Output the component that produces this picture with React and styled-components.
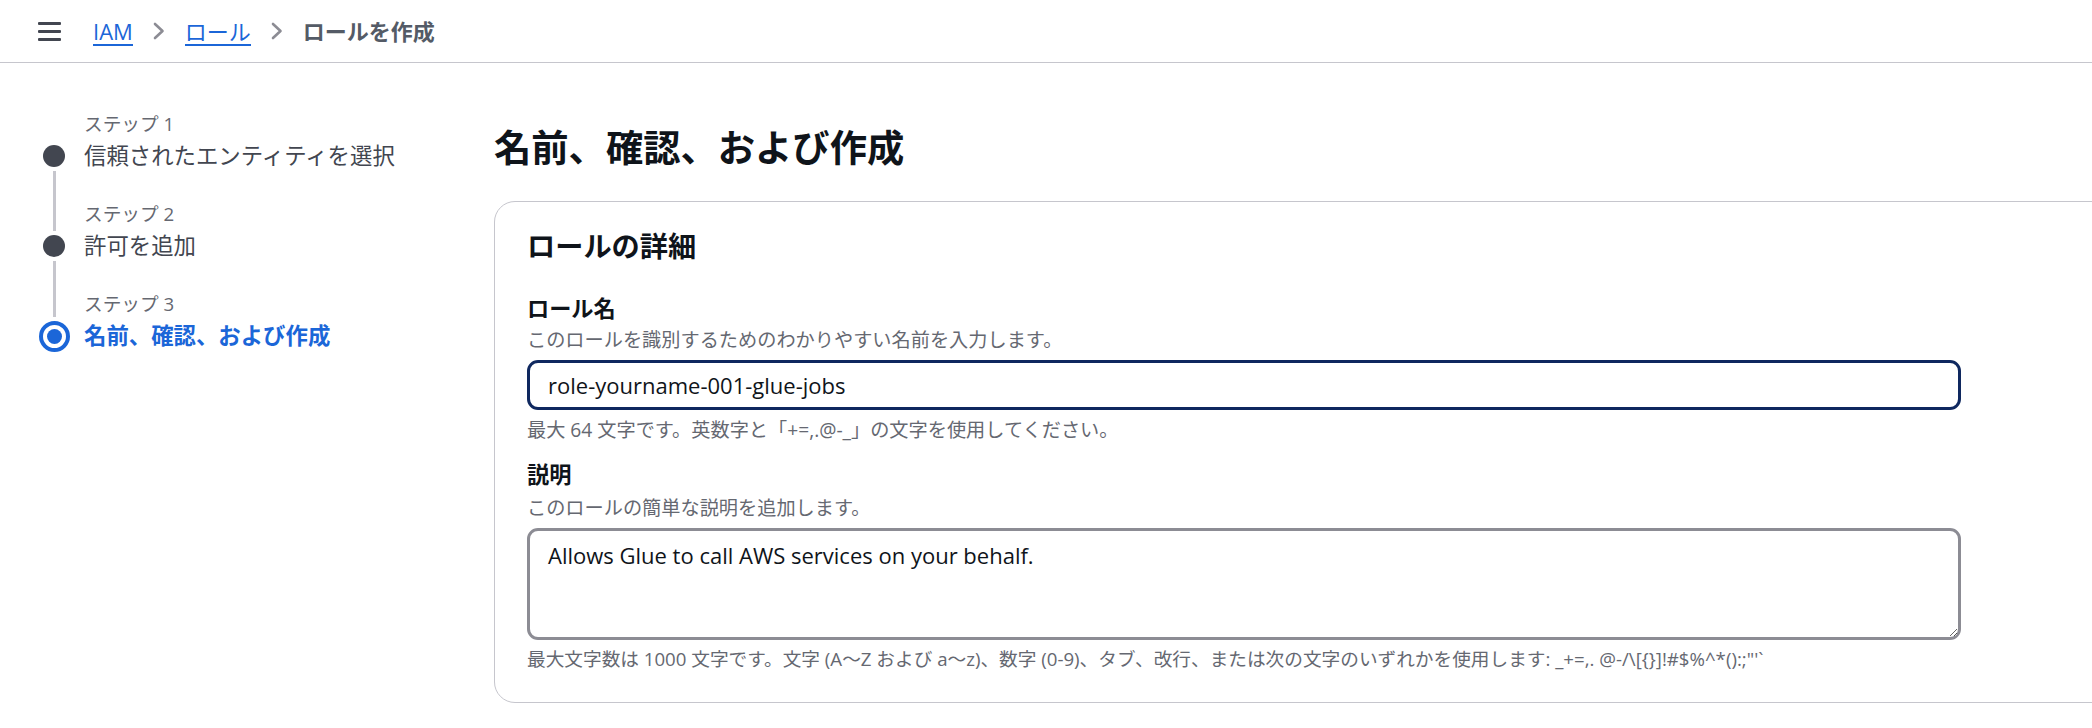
import React from "react";
import styled, { createGlobalStyle } from "styled-components";

const GlobalStyle = createGlobalStyle`
  html, body { margin: 0; padding: 0; background: #ffffff; overflow: hidden; }
  body {
    font-family: "Open Sans", "Noto Sans CJK JP", sans-serif;
    color: #0f141a;
  }
  * { box-sizing: border-box; }
`;

const Page = styled.div`
  width: 2092px;
  min-height: 728px;
  overflow: hidden;
`;

const TopBar = styled.header`
  display: flex;
  align-items: center;
  gap: 32px;
  height: 63px;
  padding-left: 38px;
  border-bottom: 1px solid #c6c6cd;
`;

const MenuButton = styled.button`
  display: flex;
  flex-direction: column;
  justify-content: center;
  gap: 5px;
  width: 23px;
  padding: 0;
  border: none;
  background: none;
  span {
    display: block;
    height: 3px;
    border-radius: 1px;
    background: #424650;
  }
`;

const Crumbs = styled.nav`
  display: flex;
  align-items: center;
  gap: 20px;
  font-size: 22px;
`;

const CrumbLink = styled.a`
  color: #1b66d8;
  text-decoration: none;
  line-height: 26px;
  border-bottom: 2px solid #1b66d8;
  padding-top: 2px;
`;

const CrumbCurrent = styled.span`
  color: #545b66;
  font-weight: 700;
  line-height: 26px;
`;

const Chevron = () => (
  <svg width="12" height="18" viewBox="0 0 12 18" fill="none">
    <polyline points="2,2 9.5,9 2,16" stroke="#8c8c94" strokeWidth="2.6" strokeLinecap="round" strokeLinejoin="round" />
  </svg>
);

const Body = styled.div`
  display: flex;
`;

const SideNav = styled.ol`
  flex: 0 0 494px;
  margin: 0;
  padding: 47px 0 0 32px;
  list-style: none;
`;

const Step = styled.li`
  display: grid;
  grid-template-columns: 44px 1fr;
  column-gap: 8px;
  height: 90px;
`;

const DotCol = styled.div`
  display: flex;
  flex-direction: column;
  align-items: center;
`;

const Connector = styled.div`
  width: 3px;
  height: ${(p) => p.$h}px;
  flex: none;
  background: ${(p) => (p.$show ? "#c6c6cd" : "transparent")};
`;

const Dot = styled.div`
  flex: none;
  width: 22px;
  height: 22px;
  margin: 4px 0;
  border-radius: 50%;
  background: #424650;
`;

const ActiveDot = styled.div`
  flex: none;
  width: 31px;
  height: 31px;
  margin: 4px 0;
  border-radius: 50%;
  border: 4px solid #1b66d8;
  display: grid;
  place-items: center;
  &::before {
    content: "";
    width: 15px;
    height: 15px;
    border-radius: 50%;
    background: #1b66d8;
  }
`;

const StepText = styled.div`
  display: flex;
  flex-direction: column;
`;

const StepLabel = styled.span`
  font-size: 18.67px;
  line-height: 28px;
  color: #656871;
`;

const StepTitle = styled.span`
  font-size: 22.4px;
  line-height: 36px;
  color: ${(p) => (p.$active ? "#1b66d8" : "#424650")};
  font-weight: ${(p) => (p.$active ? 700 : 400)};
`;

const Main = styled.main`
  flex: 0 0 1680px;
  padding-top: 61px;
`;

const PageTitle = styled.h1`
  margin: 0;
  font-size: 37.3px;
  line-height: 48px;
  font-weight: 700;
  color: #0f141a;
`;

const Card = styled.section`
  margin-top: 29px;
  border: 1px solid #c6c6cd;
  border-radius: 21px;
  padding: 27px 32px 30px;
`;

const CardTitle = styled.h2`
  margin: 0 0 31px;
  font-size: 28.2px;
  line-height: 34px;
  font-weight: 700;
`;

const Field = styled.div`
  width: 1434px;
  display: flex;
  flex-direction: column;
  & + & {
    margin-top: 17px;
  }
`;

const Label = styled.label`
  font-size: 22.2px;
  line-height: 30px;
  font-weight: 700;
`;

const Hint = styled.span`
  font-size: ${(p) => (p.$small ? 18.67 : 19.2)}px;
  line-height: 26px;
  color: #656871;
  margin-top: ${(p) => p.$mt || 0}px;
`;

const TextInput = styled.input`
  margin-top: 7px;
  height: 50px;
  width: 100%;
  padding: 0 18px;
  border: 3px solid #0f285f;
  border-radius: 11px;
  font-family: "Open Sans", "Noto Sans CJK JP", sans-serif;
  font-size: 22px;
  color: #0f141a;
  outline: none;
  background: #fff;
`;

const TextArea = styled.textarea`
  margin-top: 7px;
  height: 112px;
  width: 100%;
  padding: 10px 18px;
  border: 3px solid #8c8c94;
  border-radius: 11px;
  font-family: "Open Sans", "Noto Sans CJK JP", sans-serif;
  font-size: 22px;
  line-height: 28px;
  color: #0f141a;
  outline: none;
  resize: vertical;
  background: #fff;
`;

const steps = [
  { label: "ステップ 1", title: "信頼されたエンティティを選択" },
  { label: "ステップ 2", title: "許可を追加" },
  { label: "ステップ 3", title: "名前、確認、および作成", active: true },
];

export default function App() {
  return (
    <Page>
      <GlobalStyle />
      <TopBar>
        <MenuButton aria-label="menu">
          <span />
          <span />
          <span />
        </MenuButton>
        <Crumbs>
          <CrumbLink href="#">IAM</CrumbLink>
          <Chevron />
          <CrumbLink href="#">ロール</CrumbLink>
          <Chevron />
          <CrumbCurrent>ロールを作成</CrumbCurrent>
        </Crumbs>
      </TopBar>
      <Body>
        <SideNav>
          {steps.map((s, i) => {
            const size = s.active ? 31 : 22;
            const top = 46 - size / 2 - 4;
            const bottom = 90 - 46 - size / 2 - 4;
            return (
              <Step key={s.label}>
                <DotCol>
                  <Connector $h={top} $show={i > 0} />
                  {s.active ? <ActiveDot /> : <Dot />}
                  <Connector $h={bottom} $show={i < steps.length - 1} />
                </DotCol>
                <StepText>
                  <StepLabel>{s.label}</StepLabel>
                  <StepTitle $active={s.active}>{s.title}</StepTitle>
                </StepText>
              </Step>
            );
          })}
        </SideNav>
        <Main>
          <PageTitle>名前、確認、および作成</PageTitle>
          <Card>
            <CardTitle>ロールの詳細</CardTitle>
            <Field>
              <Label>ロール名</Label>
              <Hint $mt={3}>このロールを識別するためのわかりやすい名前を入力します。</Hint>
              <TextInput readOnly value="role-yourname-001-glue-jobs" />
              <Hint $mt={7}>最大 64 文字です。英数字と「+=,.@-_」の文字を使用してください。</Hint>
            </Field>
            <Field>
              <Label>説明</Label>
              <Hint $mt={5}>このロールの簡単な説明を追加します。</Hint>
              <TextArea readOnly value="Allows Glue to call AWS services on your behalf." />
              <Hint $mt={6} $small>
                最大文字数は 1000 文字です。文字 (A〜Z および a〜z)、数字 (0-9)、タブ、改行、または次の文字のいずれかを使用します: _+=,. @-/\[{"{}"}]!#$%^*():;"'`
              </Hint>
            </Field>
          </Card>
        </Main>
      </Body>
    </Page>
  );
}
